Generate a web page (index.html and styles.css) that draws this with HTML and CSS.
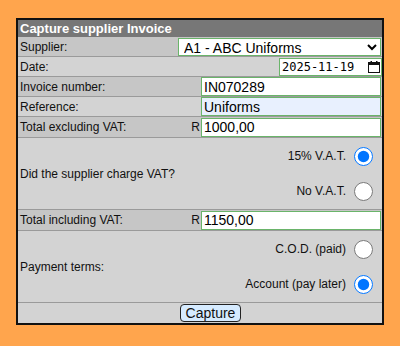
FILE: index.html
```
<!DOCTYPE html>
<html lang="en">
  <head>
    <meta charset="UTF-8" />
    <title>Capture supplier Invoice</title>
    <link rel="stylesheet" href="styles.css">
  </head>
  <body>
    <form class="panel" onsubmit="return false">
      <div class="title">Capture supplier Invoice</div>

      <div class="row dark">
        <label>Supplier:</label>
        <div class="field wide">
          <select class="supplier">
            <option>A1 - ABC Uniforms</option>
          </select>
        </div>
      </div>

      <div class="row">
        <label>Date:</label>
        <div class="field wide right">
          <span class="date">
            <input type="text" value="2025-11-19" />
            <!-- calendar picker icon -->
            <svg width="12" height="12" viewBox="0 0 12 12">
              <rect x="0.5" y="1.5" width="11" height="10" fill="none" stroke="#111" />
              <rect x="0.5" y="1.5" width="11" height="2.5" fill="#111" />
              <rect x="2.5" y="0" width="1.5" height="2" fill="#111" />
              <rect x="8" y="0" width="1.5" height="2" fill="#111" />
            </svg>
          </span>
        </div>
      </div>

      <div class="row dark">
        <label>Invoice number:</label>
        <span></span>
        <div class="field"><input type="text" value="IN070289" /></div>
      </div>

      <div class="row">
        <label>Reference:</label>
        <span></span>
        <div class="field"><input type="text" class="filled" value="Uniforms" /></div>
      </div>

      <div class="row dark money">
        <label>Total excluding VAT:</label>
        <span class="cur">R</span>
        <div class="field"><input type="text" value="1000,00" /></div>
      </div>

      <div class="row tall">
        <label>Did the supplier charge VAT?</label>
        <div class="field wide options">
          <div class="opt">15% V.A.T. <input type="radio" name="vat" checked /></div>
          <div class="opt">No V.A.T. <input type="radio" name="vat" /></div>
        </div>
      </div>

      <div class="row dark money">
        <label>Total including VAT:</label>
        <span class="cur">R</span>
        <div class="field"><input type="text" value="1150,00" /></div>
      </div>

      <div class="row tall">
        <label>Payment terms:</label>
        <div class="field wide options">
          <div class="opt">C.O.D. (paid) <input type="radio" name="terms" /></div>
          <div class="opt">Account (pay later) <input type="radio" name="terms" checked /></div>
        </div>
      </div>

      <div class="actions">
        <button type="submit">Capture</button>
      </div>
    </form>
  </body>
</html>
```

FILE: styles.css
```
body {
  margin: 0;
  background: #ffa54d;
  font-family: "Liberation Sans", Arial, sans-serif;
  font-size: 12px;
  color: #111;
}

.panel {
  width: 364px;
  margin: 18px auto 0;
  border: 2px solid #111;
  background: #d3d3d3;
}

.title {
  background: #777;
  color: #fff;
  font-weight: bold;
  font-size: 13px;
  height: 17px;
  line-height: 17px;
  padding-left: 2px;
}

.row {
  display: grid;
  grid-template-columns: 160px 23px 1fr;
  align-items: center;
  min-height: 19px;
  border-bottom: 1px solid #9a9a9a;
  background: #d3d3d3;
}

.row.dark {
  background: #c6c6c6;
}

.row.money {
  min-height: 20px;
}

.row label {
  padding-left: 2px;
}

.cur {
  text-align: right;
  padding-right: 1px;
}

.field {
  display: flex;
}

.field.wide {
  grid-column: 2 / 4;
}

.field.right {
  justify-content: flex-end;
}

input[type="text"],
.supplier {
  box-sizing: border-box;
  border: 1px solid #6ab46a;
  font-family: "Liberation Sans", Arial, sans-serif;
  font-size: 14px;
  color: #000;
  margin: 0;
}

input[type="text"] {
  width: 180px;
  height: 19px;
  padding: 0 2px;
  background: #fff;
}

input.filled {
  background: #e8f0fe;
}

.supplier {
  width: 203px;
  height: 18px;
  padding: 0 0 0 1px;
  background: #fff;
}

.date {
  box-sizing: border-box;
  display: flex;
  align-items: center;
  width: 103px;
  height: 18px;
  border: 1px solid #6ab46a;
  background: #fff;
}

.date input[type="text"] {
  width: 86px;
  height: 16px;
  border: none;
  padding: 0 0 0 2px;
  font-family: "DejaVu Sans Mono", monospace;
  font-size: 12px;
  background: transparent;
}

.date svg {
  margin-left: 2px;
}

.row.tall {
  min-height: 71px;
}

.options {
  flex-direction: column;
  align-items: flex-end;
}

.opt {
  display: flex;
  align-items: center;
  height: 35px;
  padding-right: 9px;
}

.opt input {
  width: 19px;
  height: 19px;
  margin: 0 0 0 8px;
}

.actions {
  height: 20px;
  padding-left: 21px;
  text-align: center;
}

.actions button {
  font-family: "Liberation Sans", Arial, sans-serif;
  font-size: 14px;
  color: #111;
  height: 18px;
  margin-top: 1px;
  padding: 0 5px;
  line-height: 14px;
  background: #d6ebff;
  border: 1.5px solid #222;
  border-radius: 4px;
  cursor: pointer;
}
```
